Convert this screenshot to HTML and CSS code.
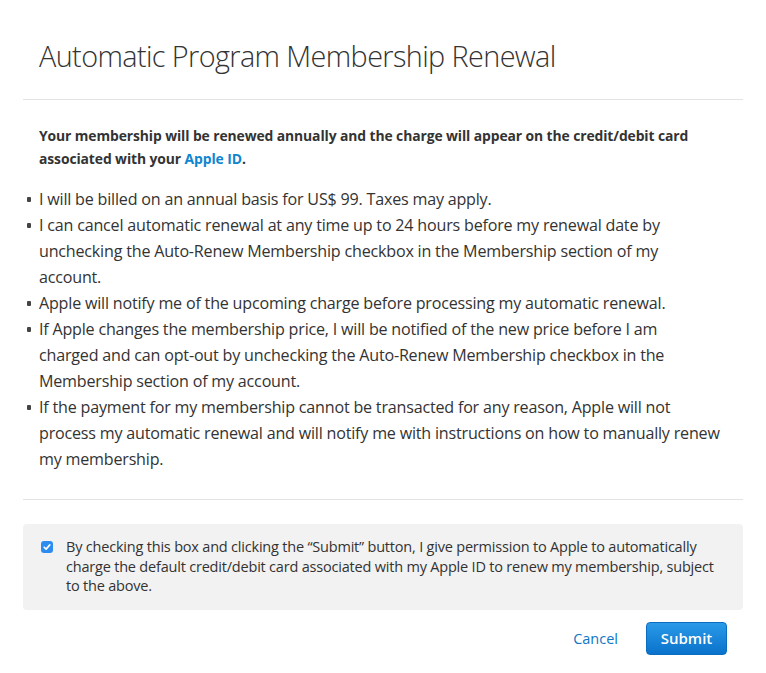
FILE: index.html
```html
<!DOCTYPE html>
<html>
<head>
<meta charset="utf-8">
<link rel="stylesheet" href="styles.css">
</head>
<body>
<div class="dialog">
  <h1 class="title">Automatic Program Membership Renewal</h1>
  <div class="body">
    <p class="lead">Your membership will be renewed annually and the charge will appear on the credit/debit card associated with your <a class="link" href="#">Apple ID</a>.</p>
    <ul class="terms">
      <li>I will be billed on an annual basis for US$ 99. Taxes may apply.</li>
      <li>I can cancel automatic renewal at any time up to 24 hours before my renewal date by<br>unchecking the Auto-Renew Membership checkbox in the Membership section of my<br>account.</li>
      <li>Apple will notify me of the upcoming charge before processing my automatic renewal.</li>
      <li>If Apple changes the membership price, I will be notified of the new price before I am<br>charged and can opt-out by unchecking the Auto-Renew Membership checkbox in the<br>Membership section of my account.</li>
      <li>If the payment for my membership cannot be transacted for any reason, Apple will not<br>process my automatic renewal and will notify me with instructions on how to manually renew<br>my membership.</li>
    </ul>
  </div>
  <div class="consent">
    <span class="check"><svg width="12" height="12" viewBox="0 0 12 12"><path d="M3.2 6.2 L5.1 8.1 L8.8 3.9" fill="none" stroke="#fff" stroke-width="1.6" stroke-linecap="round" stroke-linejoin="round"/></svg></span>
    <p class="consent-text">By checking this box and clicking the “Submit” button, I give permission to Apple to automatically charge the default credit/debit card associated with my Apple ID to renew my membership, subject to the above.</p>
  </div>
  <div class="actions">
    <a class="cancel" href="#">Cancel</a>
    <button class="submit">Submit</button>
  </div>
</div>
</body>
</html>
```
FILE: styles.css
```css
html, body {
  margin: 0;
  padding: 0;
  background: #fff;
}
body {
  font-family: "Open Sans", "Liberation Sans", sans-serif;
  color: #333;
}
.dialog {
  width: 720px;
  padding: 0 23px;
}
.title {
  margin: 0;
  padding: 36px 16px 0 16px;
  height: 63px;
  font-size: 28.8px;
  font-weight: 300;
  color: #333;
  letter-spacing: -0.6px;
  line-height: 40px;
  border-bottom: 1px solid #e3e3e3;
}
.body {
  padding: 24px 0 27px 16px;
  border-bottom: 1px solid #e3e3e3;
}
.lead {
  margin: 0;
  padding-right: 16px;
  font-size: 13.9px;
  font-weight: 700;
  line-height: 23px;
  color: #333;
  letter-spacing: -0.1px;
}
.link {
  color: #0f86cf;
  text-decoration: none;
}
.terms {
  margin: 16px 0 0 0;
  padding: 0;
  list-style: none;
}
.terms li {
  position: relative;
  font-size: 16.1px;
  line-height: 26px;
  color: #333;
  letter-spacing: -0.2px;
  white-space: nowrap;
}
.terms li::before {
  content: "";
  position: absolute;
  left: -12px;
  top: 11px;
  width: 4px;
  height: 5px;
  border-radius: 1px;
  background: #444;
}
.consent {
  margin-top: 24px;
  background: #f2f2f2;
  border-radius: 4px;
  display: flex;
  align-items: flex-start;
  padding: 13px 20px 14px 18px;
}
.check {
  flex: none;
  width: 12px;
  height: 12px;
  margin-top: 4px;
  margin-right: 13px;
  border-radius: 3px;
  background: #2d8cf0;
  display: flex;
  align-items: center;
  justify-content: center;
}
.consent-text {
  margin: 0;
  font-size: 14.5px;
  line-height: 19.5px;
  color: #333;
  letter-spacing: -0.2px;
}
.actions {
  display: flex;
  justify-content: flex-end;
  align-items: center;
  padding: 12px 16px 0 0;
}
.cancel {
  color: #0f76c5;
  text-decoration: none;
  font-size: 14.5px;
  margin-right: 28px;
}
.submit {
  width: 81px;
  height: 33px;
  border: 1px solid #0a6dc0;
  border-radius: 4px;
  background: linear-gradient(#2a9ae8, #0a72cb);
  color: #fff;
  font-family: inherit;
  font-size: 15px;
  font-weight: 600;
  padding: 0;
}
```
